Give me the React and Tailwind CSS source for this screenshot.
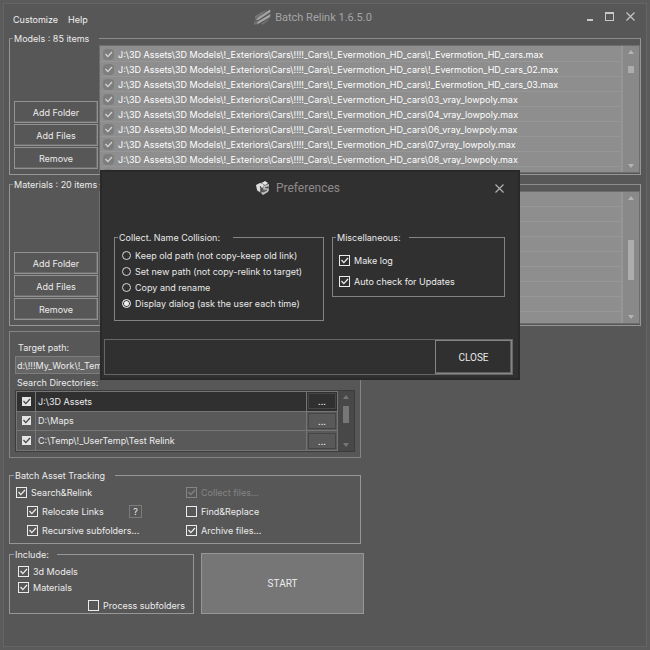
import React, { useState } from "react";

const CARS = "J:\\3D Assets\\3D Models\\!_Exteriors\\Cars\\!!!!_Cars\\!_Evermotion_HD_cars\\";
const MODEL_FILES = [
  "!_Evermotion_HD_cars.max",
  "!_Evermotion_HD_cars_02.max",
  "!_Evermotion_HD_cars_03.max",
  "03_vray_lowpoly.max",
  "04_vray_lowpoly.max",
  "06_vray_lowpoly.max",
  "07_vray_lowpoly.max",
  "08_vray_lowpoly.max",
  "R188_08.max",
];
const DIRECTORIES = ["J:\\3D Assets", "D:\\Maps", "C:\\Temp\\!_UserTemp\\Test Relink"];

function Tick({ className }) {
  return (
    <svg viewBox="0 0 11 11" className={"pointer-events-none col-start-1 row-start-1 size-[11px] " + className} fill="none" stroke="currentColor">
      <path d="M2.5 5 L4.8 7.6 L9 3" strokeWidth="1.3" />
    </svg>
  );
}

function Check({ label, defaultChecked, disabled }) {
  const [on, setOn] = useState(!!defaultChecked);
  return (
    <label className={"flex w-fit items-center gap-1 " + (disabled ? "text-[#858585]" : "text-[#ececec]")}>
      <span className="grid shrink-0">
        <input
          type="checkbox"
          checked={on}
          disabled={disabled}
          onChange={(e) => setOn(e.target.checked)}
          className="col-start-1 row-start-1 size-[11px] appearance-none border border-current"
        />
        {on && <Tick className="" />}
      </span>
      {label}
    </label>
  );
}

function Radio({ label, defaultChecked }) {
  return (
    <label className="flex w-fit items-center gap-1">
      <input
        type="radio"
        name="collision"
        defaultChecked={defaultChecked}
        className="size-[9px] shrink-0 appearance-none rounded-full border border-[#d8d8d8] checked:bg-[#f0f0f0] checked:shadow-[inset_0_0_0_1px_#303030]"
      />
      {label}
    </label>
  );
}

function Arrow({ down, className = "" }) {
  return (
    <svg viewBox="0 0 6 4" className={"h-1 w-1.5 " + className} fill="currentColor">
      <path d={down ? "M0 0h6L3 4z" : "M3 0l3 4H0z"} />
    </svg>
  );
}

function SideButton({ children }) {
  return (
    <button type="button" className="h-[22px] border border-[#929292] shadow-[inset_-1px_-1px_0_#6c6c6c]">
      {children}
    </button>
  );
}

function FileGroup({ title, children, thumb, top, height }) {
  return (
    <fieldset className="min-w-0 border border-t-[#8c8c8c] border-[#969696] pb-px pl-1">
      <legend className="-ml-px h-[13px] w-[86px] whitespace-nowrap pl-px leading-[13px]">{title}</legend>
      <div className="flex gap-px">
        <div className="flex w-[84px] shrink-0 flex-col justify-end gap-px pb-1">
          <SideButton>Add Folder</SideButton>
          <SideButton>Add Files</SideButton>
          <SideButton>Remove</SideButton>
        </div>
        <div className={"flex min-w-0 flex-1 overflow-hidden border border-[#6d6d6d] bg-[#8e8e8e] " + height}>
          <div className="min-w-0 flex-1 border-r-2 border-[#969696]">{children}</div>
          <div className="flex w-4 shrink-0 flex-col items-center justify-between bg-[#898989] py-1 text-[#b4b4b4]">
            <div className="flex flex-col items-center">
              <Arrow />
              <div className={"w-1.5 bg-[#adadad] " + top + " " + thumb} />
            </div>
            <Arrow down />
          </div>
        </div>
      </div>
    </fieldset>
  );
}

function SlashLogo() {
  return (
    <svg viewBox="0 0 17 16" className="h-4 w-[17px]">
      <path d="M1 7 L10 2 L13 1 L6 7 L1 10z" fill="#757575" />
      <path d="M4 8.5 L16 0.5 L16.5 3 L5 10.5 L1 11.5z" fill="#a3a3a3" />
      <path d="M0 13 L5 11.5 L3 15 L0 16z" fill="#727272" />
      <path d="M4 12.5 L16.5 5 L16 8 L3 15.5z" fill="#a8a8a8" />
      <path d="M7 14.5 L15 10 L14 12 L8 16z" fill="#727272" />
    </svg>
  );
}

function CubeLogo() {
  return (
    <svg viewBox="0 0 14 14" className="size-3.5">
      <path d="M1 4 L6 1 L13 3 L13 10 L7 13 L1 10z" fill="#6d6d6d" />
      <path d="M0 4 L4 2 L7 3 L8 5 L6 7 L4 6 L4 11 L1 9z" fill="#dedede" />
      <path d="M8 5 L13 3 L13 5 L10 7 L13 8 L12 11 L7 14 L5 12 L10 9 L7 8z" fill="#bdbdbd" />
      <path d="M6 2 L9 0 L12 2 L9 4z" fill="#e8e8e8" />
      <path d="M4 5 L6 8 L6 11 M9 7 L12 6 M7 11 L11 9" stroke="#3a3a3a" strokeWidth="0.9" fill="none" />
    </svg>
  );
}

function CloseGlyph() {
  return (
    <svg viewBox="0 0 9 9" className="size-[9px]" fill="none" stroke="currentColor" strokeWidth="1.1">
      <path d="M0.5 0.5l8 8M8.5 0.5l-8 8" />
    </svg>
  );
}

function TitleBar() {
  return (
    <header className="grid h-7 grid-cols-[1fr_auto_1fr] items-center pl-1">
      <nav className="flex gap-2.5 pt-0.5 text-[#f0f0f0]">
        <button type="button">Customize</button>
        <button type="button">Help</button>
      </nav>
      <h1 className="-mt-0.5 flex items-center gap-1 pr-7 font-['Roboto',sans-serif] text-[11px] text-[#a5a5a5]">
        <SlashLogo />
        Batch Relink 1.6.5.0
      </h1>
      <div className="-mt-1 flex items-center justify-end gap-3 pr-1.5 text-[#c8c8c8]">
        <button type="button" aria-label="Minimize" className="flex h-2.5 items-end">
          <span className="block h-0.5 w-1.5 bg-current" />
        </button>
        <button type="button" aria-label="Maximize" className="h-[9px] w-[9px] border border-t-2 border-current" />
        <button type="button" aria-label="Close window">
          <CloseGlyph />
        </button>
      </div>
    </header>
  );
}

function ModelRow({ name, index }) {
  const id = "model-" + index;
  return (
    <li className="flex h-[15px] items-center gap-1 border-b border-[#969696] pl-[3px] text-white">
      <span className="grid shrink-0">
        <input id={id} type="checkbox" defaultChecked className="peer col-start-1 row-start-1 size-[11px] appearance-none rounded-sm bg-[#7d7d7d]" />
        <Tick className="hidden text-[#d5d5d5] peer-checked:block" />
      </span>
      <label htmlFor={id} className="whitespace-nowrap">{CARS + name}</label>
    </li>
  );
}

function SearchPanel() {
  return (
    <section className="mt-[5px] w-[352px] border border-[#848484] px-[5px] pb-[5px] pt-2">
      <label htmlFor="target" className="ml-[3px] block h-4 leading-4">Target path:</label>
      <input
        id="target"
        type="text"
        defaultValue={"d:\\!!!My_Work\\!_Temp\\Relink"}
        className="block h-[18px] w-full border border-[#7d7d7d] bg-[#666666] px-px outline-none"
      />
      <h2 className="ml-0.5 mt-px h-[15px] leading-[15px]">Search Directories:</h2>
      <div className="flex h-[62px] overflow-hidden border border-[#3c3c3c]">
        <table className="flex-1 border-collapse">
          <tbody>
            {DIRECTORIES.map((dir, i) => (
              <tr key={dir} className={i === 0 ? "bg-[#303030]" : "bg-[#595959]"}>
                <td className="h-[19px] w-[19px] border border-[#757575] p-0">
                  <span className="grid justify-center">
                    <input type="checkbox" defaultChecked aria-label={dir} className="peer col-start-1 row-start-1 size-[9px] place-self-center appearance-none bg-[#e4e4e4]" />
                    <Tick className="hidden text-[#444444] peer-checked:block" />
                  </span>
                </td>
                <td className="border border-[#757575] px-0.5 py-0">{dir}</td>
                <td className="w-[31px] border border-[#757575] p-px">
                  <button type="button" aria-label={"Browse " + dir} className="block h-4 w-full border border-[#464646] leading-4">...</button>
                </td>
              </tr>
            ))}
          </tbody>
        </table>
        <div className="flex w-4 flex-col items-center justify-between bg-[#484848] py-1 text-[#777777]">
          <div className="flex flex-col items-center gap-[7px]">
            <Arrow />
            <div className="h-[17px] w-1.5 bg-[#777777]" />
          </div>
          <Arrow down />
        </div>
      </div>
    </section>
  );
}

function Preferences() {
  return (
    <div role="dialog" aria-label="Preferences" className="absolute left-[100px] top-[170px] flex h-[210px] w-[420px] flex-col border-2 border-[#292929] bg-[#303030] px-0.5 pb-[3px] text-[#e8e8e8]">
      <header className="grid h-8 shrink-0 grid-cols-[1fr_auto_1fr] items-center pr-3">
        <span />
        <h2 className="flex items-center gap-1.5 pr-3 font-['Roboto',sans-serif] text-xs text-[#8f8a8a]">
          <CubeLogo />
          Preferences
        </h2>
        <button type="button" aria-label="Close preferences" className="justify-self-end text-[#b4b4b4]">
          <CloseGlyph />
        </button>
      </header>
      <div className="mt-[27px] flex items-start gap-2 px-2.5">
        <fieldset className="h-[90px] w-[210px] border border-[#848484] pl-[7px]">
          <legend className="-ml-1 h-[13px] w-[115px] pl-px leading-[13px]">Collect. Name Collision:</legend>
          <div className="flex flex-col gap-[3px] pt-[5px] leading-[13px]">
            <Radio label="Keep old path (not copy-keep old link)" />
            <Radio label="Set new path (not copy-relink to target)" />
            <Radio label="Copy and rename" />
            <Radio label="Display dialog (ask the user each time)" defaultChecked />
          </div>
        </fieldset>
        <fieldset className="h-[66px] w-[173px] border border-[#848484] pl-1.5">
          <legend className="-ml-[3px] h-[13px] w-[73px] pl-px leading-[13px]">Miscellaneous:</legend>
          <div className="flex flex-col gap-2 pt-2.5 leading-[13px]">
            <Check label="Make log" defaultChecked />
            <Check label="Auto check for Updates" defaultChecked />
          </div>
        </fieldset>
      </div>
      <footer className="mr-[3px] mt-auto flex justify-end border border-[#666666]">
        <button type="button" className="h-[34px] w-[77px] border border-[#858585] font-['Roboto',sans-serif] text-[10px] shadow-[inset_-1px_-1px_0_#606060]">
          CLOSE
        </button>
      </footer>
    </div>
  );
}

export default function App() {
  return (
    <div className="relative min-h-screen bg-[#5b5b5b] p-[3px] font-['Inter',sans-serif] text-[9px] leading-[13px] text-[#ececec]">
      <main className="flex min-h-[calc(100vh-6px)] flex-col border border-[#656565] bg-[#575757] px-[5px] pb-2">
        <TitleBar />
        <FileGroup title="Models : 85 items" height="h-[128px]" top="mt-3" thumb="h-[7px]">
          <ul className="pt-px">
            {MODEL_FILES.map((name, i) => (
              <ModelRow key={name} name={name} index={i} />
            ))}
          </ul>
        </FileGroup>
        <div className="mt-[3px]">
          <FileGroup title="Materials : 20 items" height="h-[133px]" top="mt-10" thumb="h-10">
            <ul>
              {[1, 2, 3, 4, 5, 6, 7, 8].map((row) => (
                <li key={row} className="h-[15px] border-b border-[#989898]" />
              ))}
            </ul>
          </FileGroup>
        </div>
        <SearchPanel />
        <fieldset className="mt-[11px] w-[352px] border border-[#969696] px-1.5 pb-1.5">
          <legend className="-ml-0.5 h-[13px] w-[101px] pl-px leading-[13px]">Batch Asset Tracking</legend>
          <div className="grid grid-cols-[170px_1fr] pt-1">
            <div className="flex flex-col gap-1.5">
              <Check label="Search&Relink" defaultChecked />
              <div className="flex items-center justify-between pl-[11px] pr-11">
                <Check label="Relocate Links" defaultChecked />
                <button type="button" aria-label="Help on relocating links" className="size-[13px] border border-[#7b7b7b] leading-none">?</button>
              </div>
              <div className="pl-[11px]">
                <Check label="Recursive subfolders..." defaultChecked />
              </div>
            </div>
            <div className="flex flex-col gap-1.5">
              <Check label="Collect files..." defaultChecked disabled />
              <Check label="Find&Replace" />
              <Check label="Archive files..." defaultChecked />
            </div>
          </div>
        </fieldset>
        <div className="mt-1 flex items-end gap-[7px]">
          <fieldset className="w-[185px] border border-[#969696] px-2 pb-px">
            <legend className="-ml-1 h-[13px] w-[43px] pl-px leading-[13px]">Include:</legend>
            <div className="flex flex-col gap-[3px] pt-1">
              <Check label="3d Models" defaultChecked />
              <Check label="Materials" defaultChecked />
            </div>
            <div className="flex justify-end pt-[5px]">
              <Check label="Process subfolders" />
            </div>
          </fieldset>
          <button type="button" className="h-[61px] w-[163px] border border-[#979797] bg-[#767676] font-['Roboto',sans-serif] text-[10px]">
            START
          </button>
        </div>
      </main>
      <Preferences />
    </div>
  );
}
